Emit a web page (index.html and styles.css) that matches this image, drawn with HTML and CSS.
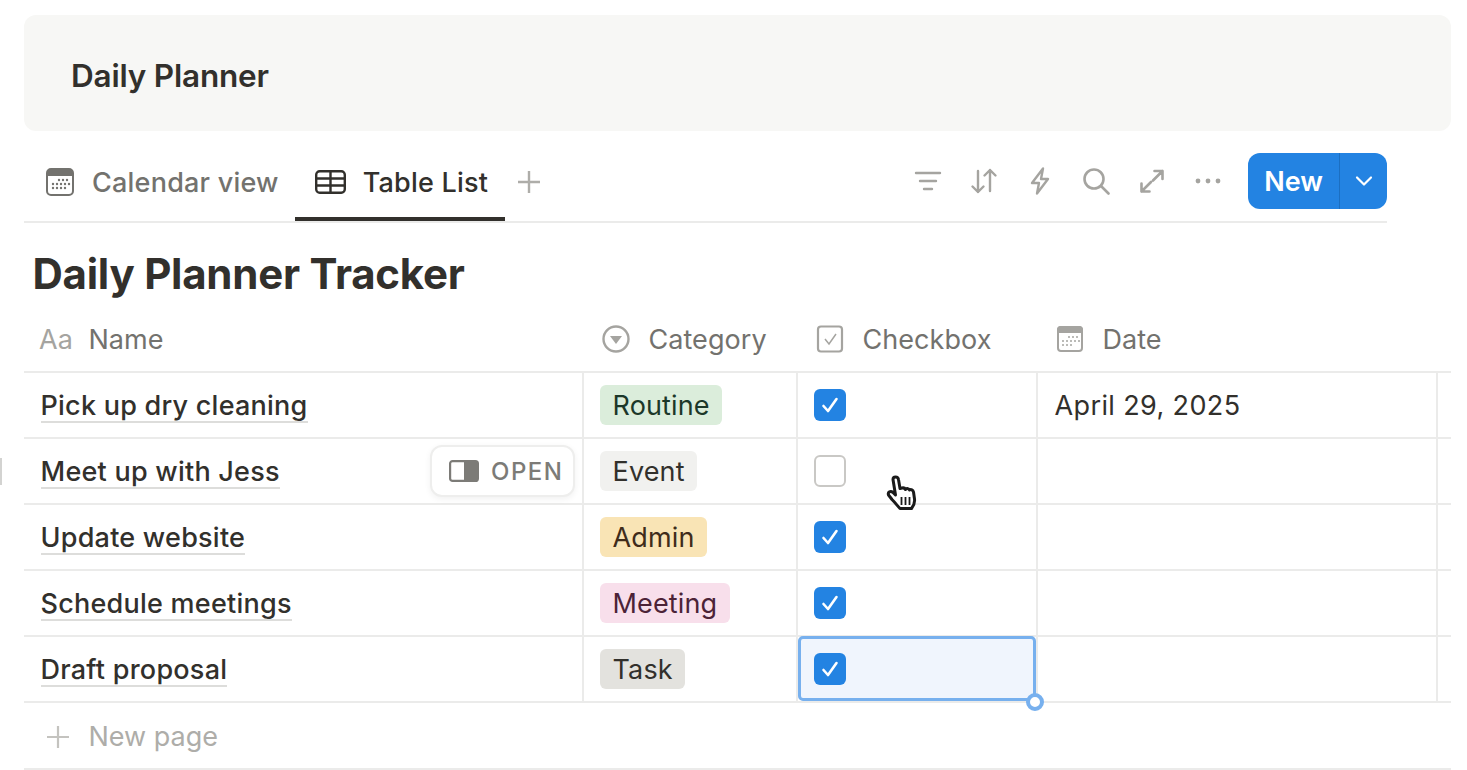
FILE: index.html
```html
<!DOCTYPE html>
<html lang="en">
<head>
<meta charset="utf-8">
<title>Daily Planner</title>
<link rel="stylesheet" href="styles.css">
</head>
<body>
<main class="page">
  <header class="hero"><h1>Daily Planner</h1></header>

  <div class="toolbar">
    <nav class="tabs">
      <div class="tab">
        <svg class="tab-ico" viewBox="0 0 28 28"><rect x="1" y="1" width="26" height="26" rx="4" fill="#fff" stroke="#73726e" stroke-width="2"/><path d="M1 8V5a4 4 0 0 1 4-4h18a4 4 0 0 1 4 4v3z" fill="#73726e"/><g fill="#73726e"><circle cx="13" cy="12" r="1.2"/><circle cx="17" cy="12" r="1.2"/><circle cx="21" cy="12" r="1.2"/><circle cx="7" cy="16" r="1.2"/><circle cx="11" cy="16" r="1.2"/><circle cx="15" cy="16" r="1.2"/><circle cx="19" cy="16" r="1.2"/><circle cx="23" cy="16" r="1.2"/><circle cx="7" cy="20" r="1.2"/><circle cx="11" cy="20" r="1.2"/><circle cx="15" cy="20" r="1.2"/><circle cx="19" cy="20" r="1.2"/></g></svg>
        <span>Calendar view</span>
      </div>
      <div class="tab active">
        <svg class="tab-ico wide" viewBox="0 0 31 24" fill="none" stroke="#32302c" stroke-width="2.4"><rect x="1.2" y="1.2" width="28.6" height="21.6" rx="3.5"/><path d="M1.2 8.5h28.6M1.2 15.500h28.600M15.500 1.200v21.600"/></svg>
        <span>Table List</span>
      </div>
      <svg class="add" viewBox="0 0 24 24" fill="none" stroke="#aeada9" stroke-width="2.4"><path d="M12 1v22M1 12h22"/></svg>
    </nav>
    <div class="actions">
      <svg class="act" viewBox="0 0 28 28" fill="none" stroke="#a5a4a0" stroke-width="2.4" stroke-linecap="round"><path d="M2 6h24M6 14h16M10 22h8"/></svg>
      <svg class="act" viewBox="0 0 28 28" fill="none" stroke="#a5a4a0" stroke-width="2.4" stroke-linecap="round" stroke-linejoin="round"><path d="M8 4v21M2.500 19.500 8 25l5.500-5.500M20 24V3M14.500 8.500 20 3l5.500 5.500"/></svg>
      <svg class="act" viewBox="0 0 28 28" fill="none" stroke="#a5a4a0" stroke-width="2.4" stroke-linejoin="round"><path d="M17 1.500 6 16h7l-2 10.500L22 12h-7z"/></svg>
      <svg class="act" viewBox="0 0 28 28" fill="none" stroke="#a5a4a0" stroke-width="2.6" stroke-linecap="round"><circle cx="12" cy="12" r="9.500"/><path d="m19 19 7.500 7.500"/></svg>
      <svg class="act" viewBox="0 0 28 28" fill="none" stroke="#a5a4a0" stroke-width="2.6" stroke-linecap="round" stroke-linejoin="round"><path d="M16.500 4h8v8M24.500 4l-9.500 9.500M3.500 16.500v8h8M3.500 24.500l9.500-9.500"/></svg>
      <svg class="act" viewBox="0 0 28 28" fill="#a5a4a0"><circle cx="4" cy="14" r="2.400"/><circle cx="14" cy="14" r="2.400"/><circle cx="24" cy="14" r="2.400"/></svg>
      <div class="new-btn">
        <span class="new-label">New</span>
        <span class="new-caret"><svg viewBox="0 0 18 12" fill="none" stroke="#fff" stroke-width="2.2" stroke-linecap="round" stroke-linejoin="round"><path d="M2 2.500 9 9.500l7-7"/></svg></span>
      </div>
    </div>
  </div>

  <h2 class="db-title">Daily Planner Tracker</h2>

  <section class="table">
    <div class="row head">
      <div class="cell name"><span class="aa">Aa</span><span>Name</span></div>
      <div class="cell cat"><svg class="h-ico" viewBox="0 0 28 28"><circle cx="14" cy="14" r="12.500" fill="none" stroke="#a5a4a0" stroke-width="2.400"/><path d="M8 11h12l-6 8z" fill="#a5a4a0"/></svg><span>Category</span></div>
      <div class="cell chk"><svg class="h-ico" viewBox="0 0 28 28"><rect x="2" y="1.500" width="24" height="25" rx="3" fill="none" stroke="#a5a4a0" stroke-width="2.200"/><path d="m9 14 4 5 7-10" fill="none" stroke="#a5a4a0" stroke-width="1.500"/></svg><span>Checkbox</span></div>
      <div class="cell date"><svg class="h-ico" viewBox="0 0 28 28"><rect x="2" y="2" width="24" height="24" rx="3" fill="#fff" stroke="#a5a4a0" stroke-width="2"/><path d="M1 8V5a4 4 0 0 1 4-4h18a4 4 0 0 1 4 4v3z" fill="#a5a4a0"/><g fill="#a5a4a0"><circle cx="13" cy="12" r="1"/><circle cx="17" cy="12" r="1"/><circle cx="21" cy="12" r="1"/><circle cx="7" cy="16" r="1"/><circle cx="11" cy="16" r="1"/><circle cx="15" cy="16" r="1"/><circle cx="19" cy="16" r="1"/><circle cx="23" cy="16" r="1"/><circle cx="7" cy="20" r="1"/><circle cx="11" cy="20" r="1"/><circle cx="15" cy="20" r="1"/></g></svg><span>Date</span></div>
      <div class="cell tail"></div>
    </div>

    <div class="row">
      <div class="cell name"><span class="title">Pick up dry cleaning</span></div>
      <div class="cell cat"><span class="tag green">Routine</span></div>
      <div class="cell chk"><span class="box on"><svg viewBox="0 0 20 20" fill="none" stroke="#fff" stroke-width="2.600" stroke-linecap="round" stroke-linejoin="round"><path d="m3.500 11 4.500 5L16.500 4"/></svg></span></div>
      <div class="cell date"><span class="val">April 29, 2025</span></div>
      <div class="cell tail"></div>
    </div>

    <div class="row">
      <div class="cell name">
        <span class="title">Meet up with Jess</span>
        <span class="open"><svg viewBox="0 0 30 22" fill="none"><rect x="1.100" y="1.100" width="27.800" height="19.800" rx="2.500" stroke="#7c7b77" stroke-width="2.200"/><rect x="15" y="2" width="13" height="18" fill="#7c7b77"/></svg><span>OPEN</span></span>
      </div>
      <div class="cell cat"><span class="tag gray">Event</span></div>
      <div class="cell chk"><span class="box"></span></div>
      <div class="cell date"></div>
      <div class="cell tail"></div>
    </div>

    <div class="row">
      <div class="cell name"><span class="title">Update website</span></div>
      <div class="cell cat"><span class="tag yellow">Admin</span></div>
      <div class="cell chk"><span class="box on"><svg viewBox="0 0 20 20" fill="none" stroke="#fff" stroke-width="2.600" stroke-linecap="round" stroke-linejoin="round"><path d="m3.500 11 4.500 5L16.500 4"/></svg></span></div>
      <div class="cell date"></div>
      <div class="cell tail"></div>
    </div>

    <div class="row">
      <div class="cell name"><span class="title">Schedule meetings</span></div>
      <div class="cell cat"><span class="tag pink">Meeting</span></div>
      <div class="cell chk"><span class="box on"><svg viewBox="0 0 20 20" fill="none" stroke="#fff" stroke-width="2.600" stroke-linecap="round" stroke-linejoin="round"><path d="m3.500 11 4.500 5L16.500 4"/></svg></span></div>
      <div class="cell date"></div>
      <div class="cell tail"></div>
    </div>

    <div class="row">
      <div class="cell name"><span class="title">Draft proposal</span></div>
      <div class="cell cat"><span class="tag stone">Task</span></div>
      <div class="cell chk selected"><span class="box on"><svg viewBox="0 0 20 20" fill="none" stroke="#fff" stroke-width="2.600" stroke-linecap="round" stroke-linejoin="round"><path d="m3.500 11 4.500 5L16.500 4"/></svg></span><i class="handle"></i></div>
      <div class="cell date"></div>
      <div class="cell tail"></div>
    </div>

    <div class="new-page">
      <svg viewBox="0 0 24 24" fill="none" stroke="#c4c3bf" stroke-width="2.200"><path d="M12 1v22M1 12h22"/></svg>
      <span>New page</span>
    </div>
  </section>

  <i class="edge"></i>
  <svg class="cursor" viewBox="0 0 32 38"><path d="M7 4.500c0-3.500 5-3.500 5.500 0l1.500 9 2-.5c2-.5 3 .5 3.500 1.500 1.500-1.500 3.500-1 4 .5 1.500-1 3.500 0 4 2l1 7c.5 4-1 7-3 9.500H14c-2-2-5-6-8-9l-3.500-4.500c-1-3 2-4.500 4.500-2.500l2.500 2.500z" fill="#fff" stroke="#1a1a1a" stroke-width="3" stroke-linejoin="round"/><path d="M15.500 22v8M19.500 22v8M23.500 22v8" stroke="#1a1a1a" stroke-width="1.800"/></svg>
</main>
</body>
</html>
```

FILE: styles.css
```css
* { box-sizing: border-box; }
html, body { margin: 0; height: 100%; background: #fff; overflow: hidden; }
body { font-family: Inter, "Liberation Sans", sans-serif; color: #32302c; }
svg { display: block; flex: none; }
.page { position: relative; width: 1467px; height: 770px; padding: 15px 16px 0 24px; }

.hero { height: 116px; background: #f7f7f5; border-radius: 12px; padding: 5px 0 0 47px; display: flex; align-items: center; }
.hero h1 { margin: 0; font-size: 31.5px; font-weight: 600; letter-spacing: -0.2px; line-height: 1; }

.toolbar { width: 1363px; height: 92px; padding-top: 22px; display: flex; justify-content: space-between; align-items: flex-start; border-bottom: 2px solid #ebebea; }
.tabs { display: flex; align-items: flex-start; height: 68px; }
.tab { height: 68px; display: flex; align-items: center; gap: 18px; padding: 0 16px 10px 22px; font-size: 27px; font-weight: 500; letter-spacing: 0.22px; color: #73726e; }
.tab.active { color: #32302c; border-bottom: 4px solid #32302c; gap: 17px; padding: 0 17px 6px 20px; }
.tab-ico { width: 28px; height: 28px; }
.tab-ico.wide { width: 31px; height: 24px; }
.add { width: 24px; height: 24px; margin: 17px 0 0 12px; }
.actions { display: flex; align-items: center; height: 56px; }
.act { width: 28px; height: 28px; margin-right: 28px; }
.act:last-of-type { margin-right: 26px; }
.new-btn { width: 139px; height: 56px; background: #2383e2; border-radius: 12px; display: flex; color: #fff; font-size: 27px; font-weight: 600; }
.new-label { width: 92px; display: flex; align-items: center; justify-content: center; border-right: 1px solid #1b6fc2; }
.new-caret { flex: 1; display: flex; align-items: center; justify-content: center; }
.new-caret svg { width: 18px; height: 12px; }

.db-title { margin: 0 0 0 8.5px; height: 92px; padding-top: 26px; font-size: 42px; line-height: 50px; font-weight: 700; letter-spacing: -0.25px; }

.table { width: 1427px; }
.row { display: grid; grid-template-columns: 560px 214px 240px 400px 13px; height: 66px; border-bottom: 2px solid #ebebea; }
.cell { display: flex; align-items: center; position: relative; border-right: 2px solid #ebebea; }
.cell.tail { border-right: 0; }
.row.head { height: 58px; color: #73726e; font-size: 27px; letter-spacing: 0.05px; }
.row.head .cell { border-right: 0; gap: 18.5px; padding: 0 0 8px 18px; }
.row.head .cell.name { padding-left: 15px; gap: 15.5px; }
.h-ico { width: 28px; height: 28px; }
.aa { color: #a5a4a0; font-size: 27px; font-weight: 400; }
.cell.name { padding-left: 16.5px; }
.title { font-size: 27px; font-weight: 500; letter-spacing: 0.24px; line-height: 30px; margin-top: 4px; border-bottom: 2px solid #dddddb; }
.cell.cat { padding-left: 16px; }
.tag { height: 40px; padding: 0 12.5px; border-radius: 6px; display: flex; align-items: center; font-size: 27px; letter-spacing: 0.15px; color: #32302c; }
.green { background: #dbeddb; color: #1c3829; }
.gray { background: #f1f1ef; }
.yellow { background: #f9e4b5; color: #402c1b; }
.pink { background: #f8dfeb; color: #4c2337; }
.stone { background: #e3e2de; }
.cell.chk { padding-left: 16px; }
.box { width: 32px; height: 32px; border-radius: 6px; border: 2px solid #c9c8c5; display: flex; align-items: center; justify-content: center; }
.box.on { background: #2383e2; border: 0; }
.box svg { width: 20px; height: 20px; }
.cell.date { padding-left: 16.5px; }
.val { font-size: 27px; letter-spacing: 0.38px; }

.open { position: absolute; top: 6px; right: 7px; width: 145px; height: 52px; display: flex; align-items: center; gap: 12px; padding-left: 17px; background: #fff; border: 2px solid #eeeeed; border-radius: 12px; box-shadow: 0 2px 6px rgba(0,0,0,.06); color: #7c7b77; font-size: 24px; font-weight: 500; letter-spacing: 1.5px; }
.open svg { width: 30px; height: 22px; }

.selected::after { content: ""; position: absolute; inset: -1px 0 0.5px 0; background: #f0f5fd; border: 3.5px solid #77b0ee; border-radius: 5px; z-index: 0; }
.selected .box { position: relative; z-index: 1; }
.handle { position: absolute; right: -8px; bottom: -10px; width: 18px; height: 18px; background: #fff; border: 4px solid #77b0ee; border-radius: 50%; z-index: 2; }

.new-page { height: 67px; display: flex; align-items: center; gap: 18.5px; padding: 2px 0 0 22px; border-bottom: 2px solid #ebebea; color: #aeada9; font-size: 27px; }
.new-page svg { width: 24px; height: 24px; }

.edge { position: absolute; left: 0; top: 458px; width: 2px; height: 27px; background: #d3d3d1; }
.cursor { position: absolute; left: 886px; top: 475px; width: 32px; height: 38px; filter: blur(0.4px); }
```
